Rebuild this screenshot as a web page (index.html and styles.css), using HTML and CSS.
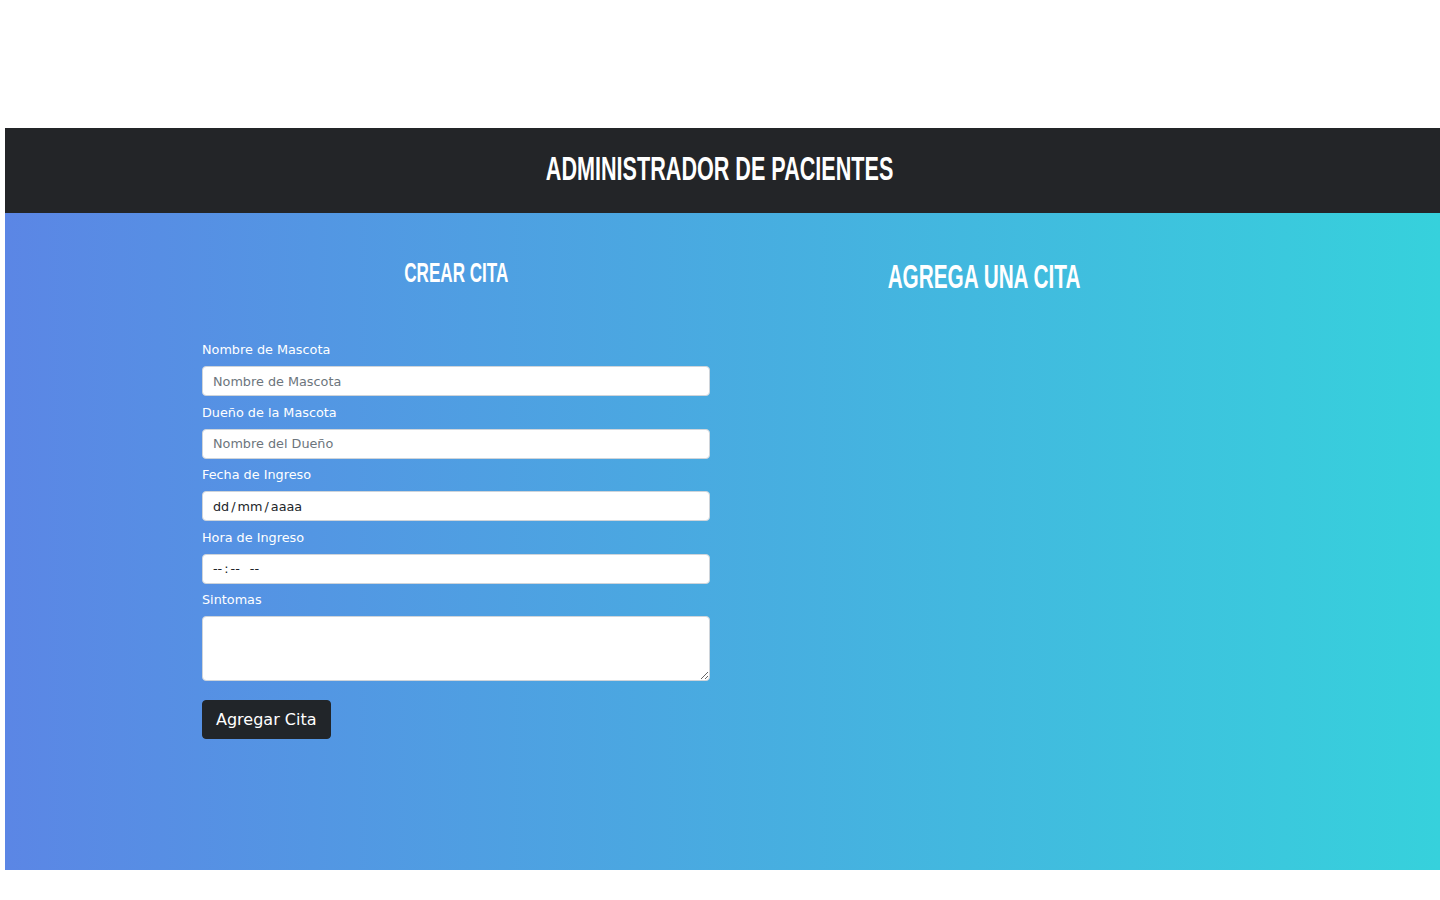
FILE: index.html
```html
<!DOCTYPE html>
<html lang="es">
<head>
<meta charset="utf-8">
<title>Administrador de Pacientes</title>
<link rel="stylesheet" href="styles.css">
</head>
<body>
<div class="page">
  <header class="topbar">
    <h1 class="title"><span class="cond wide">Administrador de Pacientes</span></h1>
  </header>
  <main class="main">
    <div class="columns">
      <section class="col">
        <h2 class="col-title small"><span class="cond">Crear Cita</span></h2>
        <form class="form">
          <label class="label" for="mascota">Nombre de Mascota</label>
          <input class="control" id="mascota" type="text" placeholder="Nombre de Mascota">
          <label class="label" for="dueno">Dueño de la Mascota</label>
          <input class="control" id="dueno" type="text" placeholder="Nombre del Dueño">
          <label class="label">Fecha de Ingreso</label>
          <div class="control fake">dd<span class="sep">/</span>mm<span class="sep">/</span>aaaa</div>
          <label class="label">Hora de Ingreso</label>
          <div class="control fake">--<span class="sep">:</span>--<span class="gap"></span>--</div>
          <label class="label" for="sintomas">Sintomas</label>
          <textarea class="control area" id="sintomas"></textarea>
          <button class="btn" type="button">Agregar Cita</button>
        </form>
      </section>
      <section class="col">
        <h2 class="col-title big"><span class="cond">Agrega una cita</span></h2>
      </section>
    </div>
  </main>
</div>
</body>
</html>
```
FILE: styles.css
```css
* { box-sizing: border-box; }
html, body { margin: 0; padding: 0; background: #fff; }
body { font-family: "DejaVu Sans", sans-serif; color: #212529; }
.page { margin: 128px 0 0 5px; }
.topbar {
  background: #232528;
  height: 85px;
  padding: 0 6px 5px 0;
  display: flex;
  align-items: center;
  justify-content: center;
}
.title, .col-title {
  margin: 0;
  font-family: "Liberation Sans", "Arial", sans-serif;
  font-weight: 700;
  text-transform: uppercase;
  color: #fff;
  line-height: 1;
  text-align: center;
}
.cond { display: inline-block; transform: scaleX(0.61); }
.cond.wide { transform: scaleX(0.635); }
.title { font-size: 34px; }
.main {
  background: linear-gradient(to right, #5b86e5, #36d1dc);
  height: 657px;
  padding-top: 46px;
}
.columns {
  display: grid;
  grid-template-columns: 508px 508px;
  column-gap: 20px;
  padding-left: 197px;
}
.col-title.small { font-size: 28px; }
.col-title.big { font-size: 34px; }
.form { display: flex; flex-direction: column; margin-top: 53px; }
.label {
  font-size: 12.8px;
  line-height: 19.5px;
  color: #fff;
  margin: 6.5px 0 6.5px;
}
.label:first-child { margin-top: 0; }
.control {
  display: block;
  width: 100%;
  height: 30px;
  border: 1px solid #ced4da;
  border-radius: 4px;
  background: #fff;
  padding: 0 10px;
  font-family: "DejaVu Sans", sans-serif;
  font-size: 12.8px;
  color: #212529;
  outline: none;
}
.control::placeholder { color: #6c757d; opacity: 1; }
.fake { display: flex; align-items: center; }
.sep { margin: 0 2px; }
.gap { width: 10px; }
.area { height: 65px; resize: vertical; padding: 6px 10px; }
.btn {
  align-self: flex-start;
  margin-top: 19px;
  height: 39px;
  padding: 0 13px;
  border: 1px solid #212529;
  border-radius: 4px;
  background: #212529;
  color: #fff;
  font-family: "DejaVu Sans", sans-serif;
  font-size: 16px;
}
```
